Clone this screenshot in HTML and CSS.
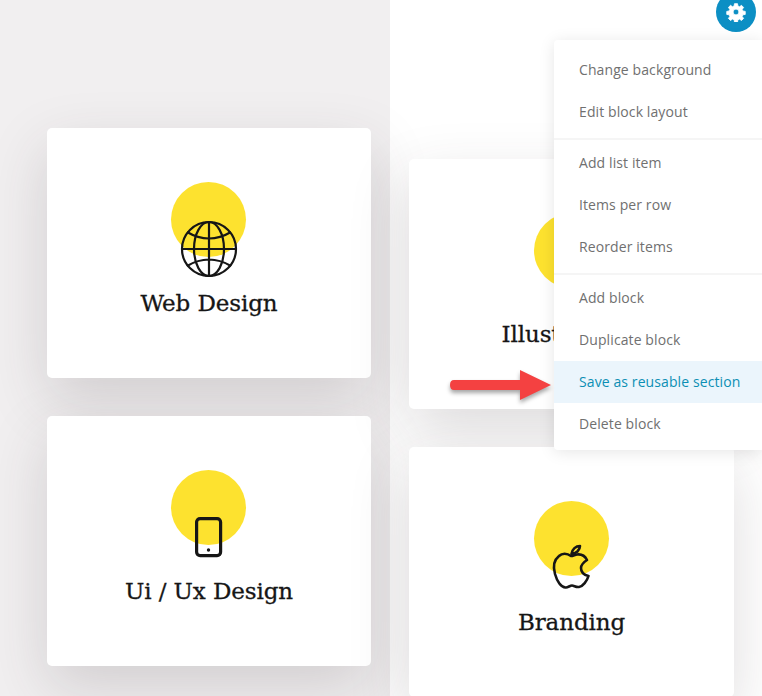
FILE: index.html
```html
<!DOCTYPE html>
<html lang="en">
<head>
    <meta charset="UTF-8">
    <title>Services block</title>
    <link rel="stylesheet" href="styles.css">
</head>
<body>
    <div class="page">
        <div class="column column-left">
            <div class="card">
                <div class="card-icon">
                    <svg width="58" height="58" viewBox="0 0 58 58" fill="none" stroke="#161616" stroke-width="2.2">
                        <circle cx="29" cy="29" r="27"/>
                        <ellipse cx="29" cy="29" rx="15" ry="27"/>
                        <path d="M29 2V56M2 29H56M7 12Q29 25 51 12M7 46Q29 33 51 46"/>
                    </svg>
                </div>
                <h3>Web Design</h3>
            </div>
            <div class="card">
                <div class="card-icon">
                    <svg width="58" height="58" viewBox="0 0 58 58" fill="none" stroke="#161616" stroke-width="3.2">
                        <rect x="16.600" y="10.600" width="24" height="37" rx="3.500"/>
                        <circle cx="28.500" cy="42" r="1.700" fill="#161616" stroke="none"/>
                    </svg>
                </div>
                <h3>Ui / Ux Design</h3>
            </div>
        </div>
        <div class="column column-right">
            <div class="card">
                <div class="card-icon"></div>
                <h3>Illustrations</h3>
            </div>
            <div class="card">
                <div class="card-icon">
                    <svg width="58" height="58" viewBox="0 0 58 58" fill="none" stroke="#161616" stroke-width="2.600" stroke-linejoin="round">
                        <path d="M28 13C24 10 19 10 16 13C11 17 10 24 12 31C14 38 18 45 23 44.500C25 44.500 27 42.500 29 42.500C31 42.500 33 44.500 36 44C40 43.500 44 38 45.500 33C41 32 38 29 38 25C38 21 41 19 44 17C42 13 38 11 34 11.500C32 11.700 30 13 28 13Z"/>
                        <path d="M28.500 11C29 6 33 3 37 3C37 7 33 11 28.500 11Z"/>
                    </svg>
                </div>
                <h3>Branding</h3>
            </div>
        </div>
    </div>

    <button class="gear-button">
        <svg width="20" height="20" viewBox="0 0 24 24" fill="#fff" stroke="#fff" stroke-width="1" stroke-linejoin="round">
            <path fill-rule="evenodd" d="M10.200 2h3.600l.5 2.900 1.900.8 2.400-1.700 2.500 2.500-1.700 2.400.8 1.900 2.900.5v3.600l-2.900.5-.8 1.900 1.700 2.400-2.500 2.500-2.400-1.700-1.900.8-.5 2.900h-3.600l-.5-2.900-1.900-.8-2.400 1.700-2.500-2.500 1.700-2.400-.8-1.900-2.900-.5v-3.600l2.900-.5.8-1.900-1.700-2.400 2.500-2.500 2.400 1.700 1.900-.8zM12 8.500a3.500 3.500 0 1 0 0 7 3.500 3.500 0 0 0 0-7z"/>
        </svg>
    </button>

    <div class="menu">
        <div class="menu-group">
            <a href="#">Change background</a>
            <a href="#">Edit block layout</a>
        </div>
        <div class="menu-group">
            <a href="#">Add list item</a>
            <a href="#">Items per row</a>
            <a href="#">Reorder items</a>
        </div>
        <div class="menu-group">
            <a href="#">Add block</a>
            <a href="#">Duplicate block</a>
            <a href="#" class="active">Save as reusable section</a>
            <a href="#">Delete block</a>
        </div>
    </div>

    <svg class="arrow" width="106" height="40" viewBox="0 0 106 40">
        <path d="M5 15H71V5L102 20L71 35V25H5Q1 25 1 20Q1 15 5 15Z" fill="#f44141"/>
    </svg>
</body>
</html>
```

FILE: styles.css
```css
body {
    margin: 0;
    height: 696px;
    overflow: hidden;
    position: relative;
    background-color: #fff;
    font-family: "Open Sans", sans-serif;
}
.page {
    display: flex;
    height: 696px;
}
.column {
    display: flex;
    flex-direction: column;
    gap: 38px;
    box-sizing: border-box;
}
.column-left {
    width: 390px;
    padding: 128px 0 0 47px;
    background-color: #f1eff0;
}
.column-right {
    flex: 1;
    padding: 159px 0 0 19px;
}
.card {
    flex: none;
    width: 324px;
    height: 250px;
    box-sizing: border-box;
    padding-top: 54px;
    background-color: #fff;
    border-radius: 5px;
    box-shadow: 0 22px 60px rgba(60, 50, 55, 0.17);
    text-align: center;
}
.column-right .card {
    width: 325px;
}
.card-icon {
    position: relative;
    width: 75px;
    height: 75px;
    margin: 0 0 0 124px;
    border-radius: 50%;
    background-color: #fde22f;
}
.column-right .card-icon {
    margin-left: 125px;
}
.card-icon svg {
    position: absolute;
    left: 9px;
    top: 38px;
}
.column-right .card-icon svg {
    top: 42px;
}
.card h3 {
    margin: 31px 0 0;
    font-family: "DejaVu Serif", serif;
    font-size: 23px;
    letter-spacing: -0.1px;
    line-height: 30px;
    font-weight: 500;
    color: #161616;
    -webkit-text-stroke: 0.3px #161616;
}
.gear-button {
    position: absolute;
    top: -8px;
    left: 716px;
    width: 40px;
    height: 40px;
    padding: 0;
    border: none;
    border-radius: 50%;
    background-color: #0c8fc4;
    display: flex;
    align-items: center;
    justify-content: center;
}
.menu {
    position: absolute;
    top: 40px;
    left: 554px;
    width: 208px;
    height: 410px;
    padding-top: 7px;
    box-sizing: border-box;
    background-color: #fff;
    border-radius: 4px 0 0 4px;
    box-shadow: 0 2px 16px rgba(0, 0, 0, 0.1);
}
.menu-group {
    padding: 2px 0 5px;
    border-bottom: 2px solid #f5f5f5;
}
.menu-group:last-child {
    border-bottom: none;
}
.menu-group a {
    display: block;
    height: 42px;
    line-height: 42px;
    padding-left: 25px;
    font-size: 14px;
    letter-spacing: 0.1px;
    color: #707070;
    text-decoration: none;
}
.menu-group a.active {
    color: #0c8fb4;
    background-color: #ebf5fc;
}
.arrow {
    position: absolute;
    top: 365px;
    left: 449px;
    filter: drop-shadow(0 3px 2px rgba(0, 0, 0, 0.35));
}
```
